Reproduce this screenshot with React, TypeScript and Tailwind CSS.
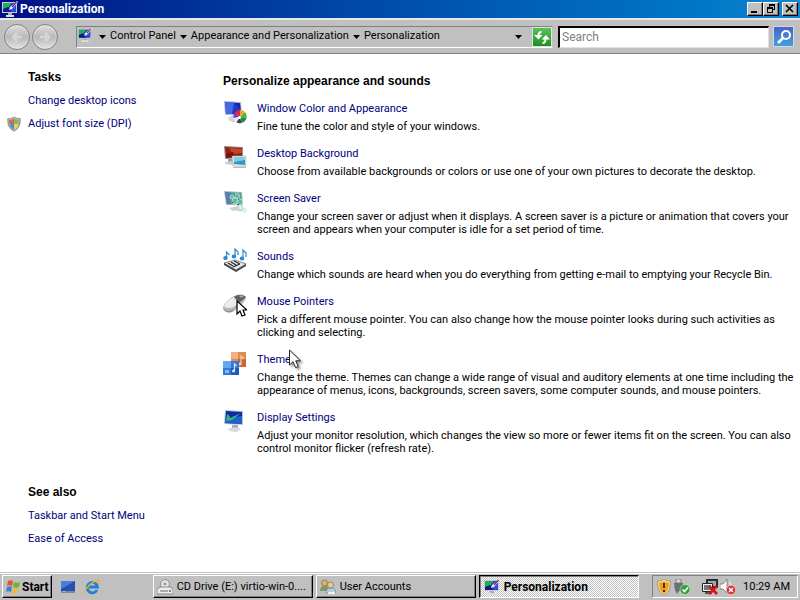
import type { ReactNode } from "react";

const raised =
  "border border-t-white border-l-white border-r-black border-b-black bg-[#c0c0c0] shadow-[inset_-1px_-1px_0_#808080]";

const heading = "font-['Liberation_Sans',Arial,sans-serif] text-[12px] leading-4 font-bold";

function MonitorBrushIcon({ className }: { className: string }) {
  return (
    <svg viewBox="0 0 16 16" className={className} aria-hidden="true">
      <path d="M0 1h15v11H0z" fill="#c8ccd6" />
      <path d="M1 2h13v9H1z" fill="#1b2fc0" />
      <path d="M1 2h9L5 8l-4 1z" fill="#1fae5c" />
      <path d="M1 8l5-2 3 5H1z" fill="#161a80" />
      <path d="M14 2v8l-4 1-2-4z" fill="#2a50e0" />
      <path d="M15 0l1 1-6 7-3 1 1-3z" fill="#e9eefc" />
      <path d="M14.500 1L10 6" stroke="#7a2050" strokeWidth="1.200" />
      <path d="M6 12h4v2H6z" fill="#a8acb4" />
      <path d="M4 14h8v2H4z" fill="#dcdee2" />
    </svg>
  );
}

function ShieldIcon() {
  return (
    <svg viewBox="0 0 16 18" className="h-4 w-4" aria-hidden="true">
      <path d="M8 1c2 1.500 4 2 7 2 0 7-1 11-7 14C2 14 1 10 1 3c3 0 5-.5 7-2z" fill="#b4b4ac" stroke="#85857c" />
      <path d="M8 3v6H3c-.4-1.500-.5-3-.5-4.500C4.500 4.400 6.500 4 8 3z" fill="#cf6a4c" />
      <path d="M8 3v6h5c.4-1.500.5-3 .5-4.500C11.500 4.400 9.500 4 8 3z" fill="#7fb869" />
      <path d="M8 9v6.500C5 14 3.600 12 3 9z" fill="#4c8fd8" />
      <path d="M8 9v6.500c3-1.500 4.400-3.500 5-6.500z" fill="#f3d04c" />
    </svg>
  );
}

function WindowColorIcon() {
  return (
    <svg viewBox="0 0 24 24" className="h-6 w-6" aria-hidden="true">
      <path d="M1 1l17 1 1 13-17 0z" fill="#b4bbe0" />
      <path d="M2 2l15 1 1 11-15 0z" fill="#2038c4" />
      <path d="M2 2l9 .6L9 14H3z" fill="#4668e0" />
      <path d="M11 3l6 .4.5 6z" fill="#1826a0" />
      <path d="M5 18l5-3 5 1v5l-5 1c-3-1-5-2-5-4z" fill="#d0d3da" />
      <path d="M17 17V10a7 7 0 0 1 5 2z" fill="#f4a428" />
      <path d="M17 17l5-5a7 7 0 0 1 1.500 6z" fill="#52b830" />
      <path d="M17 17l6.500 1a7 7 0 0 1-5 5z" fill="#1f8a4a" />
      <path d="M17 17V10a7 7 0 0 0-5.500 3z" fill="#e02c2c" />
      <path d="M17 17l-5.500-4a7 7 0 0 0-1 5z" fill="#8030d0" />
      <path d="M17 17l-6.500 1a7 7 0 0 0 3 4.500z" fill="#e9edf2" />
      <path d="M17 17l1.500 6a7 7 0 0 1-5-.5z" fill="#3c4048" />
      <circle cx="16.500" cy="17.500" r="1.500" fill="#fff" />
    </svg>
  );
}

function BackgroundIcon() {
  return (
    <svg viewBox="0 0 24 24" className="h-6 w-6" aria-hidden="true">
      <path d="M1 1l19 1v11L2 14z" fill="#8c8f96" />
      <path d="M2 2l17 1v9L3 13z" fill="#9c1f10" />
      <path d="M6 3l13 1v4l-9 1z" fill="#c4452c" />
      <path d="M3 9l7-2 2 5-9 1z" fill="#7c120a" />
      <path d="M5 14h5v3H5z" fill="#9a9da3" />
      <path d="M2 17l8-1v4l-8-1z" fill="#c9ccd0" />
      <path d="M9 11h14v11l-13-1z" fill="#dde3e8" stroke="#a8b0b8" strokeWidth=".5" />
      <path d="M11 12h11v8l-11-1z" fill="#2d9ac6" />
      <path d="M11 12h11v3l-11 2z" fill="#7ccfe8" />
      <path d="M10 22h13v1H10z" fill="#b9bdc2" />
    </svg>
  );
}

function ScreenSaverIcon() {
  return (
    <svg viewBox="0 0 24 24" className="h-6 w-6" aria-hidden="true">
      <path d="M1 1l18 1 1 13H3z" fill="#a9b8c0" />
      <path d="M2 2l16 1 1 11H4z" fill="#4a9a98" />
      <path d="M2 2l6 .5L7 14H4z" fill="#5580b0" />
      <path d="M6 18l9-2 4 4-9 1z" fill="#cdd5d3" />
      <g fill="#7ec8ac" fillOpacity=".6" stroke="#bdebd6" strokeWidth=".8">
        <circle cx="9" cy="7" r="2" />
        <circle cx="14" cy="6" r="2.500" />
        <circle cx="12" cy="11" r="3" />
        <circle cx="17" cy="12" r="3" />
        <circle cx="17" cy="18" r="3" fill="#c9ebdc" stroke="#a5cfbd" />
        <circle cx="21.500" cy="20.500" r="1.800" fill="#e0f4ea" stroke="#b9dccc" />
      </g>
      <path d="M11 5h1v1h-1zM15 9h1v1h-1zM9 12h1v1H9zM14 14h2v1h-2z" fill="#226a50" />
    </svg>
  );
}

function SoundsIcon() {
  return (
    <svg viewBox="0 0 24 24" className="h-6 w-6" aria-hidden="true">
      <path d="M1 15l11-3 11 4-10 6z" fill="#e8eaec" stroke="#50545a" strokeWidth=".7" />
      <path d="M1 15v2l12 7 10-6v-2l-10 6z" fill="#43474d" />
      <path d="M5 15l5 3M8 14l5 3M11 13l6 3M10 19l7-3" stroke="#24272b" strokeWidth="1.300" />
      <g fill="#2e86d0" stroke="#2e86d0" strokeWidth="1.200">
        <path d="M3.500 10V4l3 3" fill="none" />
        <ellipse cx="2.500" cy="10" rx="1.700" ry="1.300" />
        <path d="M12 8V1l3 3v3" fill="none" />
        <ellipse cx="11" cy="8.500" rx="1.700" ry="1.300" />
        <path d="M20 10V2l3 3v4" fill="none" />
        <ellipse cx="19" cy="10.500" rx="1.700" ry="1.300" />
      </g>
    </svg>
  );
}

function MouseIcon() {
  return (
    <svg viewBox="0 0 24 24" className="h-6 w-6" aria-hidden="true">
      <path d="M0 15C0 11 7 4 14 2c5-.5 8 0 9 3-1 4-9 12-14 14-5 1-9-1-9-4z" fill="#b4b6ba" />
      <path d="M1 13C3 9 7 5 12 4l4 5c-3 3-6 6-9 6-3 0-6-1-6-2z" fill="#ececee" />
      <path d="M11 4c2-2 8-4 12 0l-7 6z" fill="#5c5f64" />
      <path d="M16 3c2-1 4-1 5 0l-3 2z" fill="#a4a8ad" />
      <path d="M1 16c2 3 7 2 10 0l-2 3c-4 1-8 0-8-3z" fill="#8e9196" />
      <path d="M14 8v13l3-3 2 5 3-1-2-5h4z" fill="#fff" stroke="#000" strokeWidth="1.200" />
    </svg>
  );
}

function ThemeIcon() {
  return (
    <svg viewBox="0 0 24 24" className="h-6 w-6" aria-hidden="true">
      <path d="M8 1h15v15H8z" fill="#e08a54" />
      <path d="M8 1h7v7H8z" fill="#f4b080" />
      <path d="M15 8h8v8h-8z" fill="#c86838" />
      <path d="M18 13V5l3 3" fill="none" stroke="#f8d0b0" strokeWidth="1.200" />
      <circle cx="17" cy="13" r="1.500" fill="#f8d0b0" />
      <path d="M0 10h16v14H0z" fill="#3478d8" />
      <path d="M0 10h8v7H0z" fill="#62a8f0" />
      <path d="M8 17h8v7H8z" fill="#1c58bc" />
      <path d="M11.500 20v-7l2 2" fill="none" stroke="#cfe6ff" strokeWidth="1.200" />
      <circle cx="10.500" cy="20" r="1.500" fill="#cfe6ff" />
      <path d="M2 19h4v3H2z" fill="#7dbcf5" />
    </svg>
  );
}

function DisplayIcon() {
  return (
    <svg viewBox="0 0 24 24" className="h-6 w-6" aria-hidden="true">
      <path d="M2 1l18 1v14L1 15z" fill="#bcc3d0" />
      <path d="M3 2l16 1v12L2 14z" fill="#1028a4" />
      <path d="M2 11l10-3 7-1v8L2 14z" fill="#1c62d0" />
      <path d="M4 5c2 1 3 2 3 4l11-5-9 7-6 1z" fill="#2fb878" />
      <path d="M9 16h6v3H9z" fill="#a9adb3" />
      <path d="M5 20c4-2 10-2 13 0l-4 3c-4 0-9-1-9-3z" fill="#d6d9de" />
    </svg>
  );
}

function FlagIcon() {
  return (
    <svg viewBox="0 0 16 16" className="h-4 w-4" aria-hidden="true">
      <path d="M3 2c2-1 3-1 5 0L7 7C5 6 4 6 2 7z" fill="#e5542b" />
      <path d="M9 3c2 1 4 1 6 0l-1 5c-2 1-4 1-6 0z" fill="#6fb33c" />
      <path d="M2 8c2-1 3-1 5 0l-1 5c-2-1-4-1-5 0z" fill="#3f80d8" />
      <path d="M8 9c2 1 3 1 5 0l-1 5c-2 1-4 1-5 0z" fill="#f3bb2c" />
    </svg>
  );
}

function DesktopIcon() {
  return (
    <svg viewBox="0 0 16 16" className="h-4 w-4" aria-hidden="true">
      <path d="M1 2h14v11H1z" fill="#2450b4" />
      <path d="M1 2h14L1 10z" fill="#4a7fd8" />
      <path d="M1 12h14v2H1z" fill="#8088a0" />
      <path d="M3 12h2v1H3z" fill="#8fe070" />
    </svg>
  );
}

function ExplorerIcon() {
  return (
    <svg viewBox="0 0 16 16" className="h-4 w-4" aria-hidden="true">
      <path d="M13 11a5.200 5.200 0 1 1 .5-3H5" fill="none" stroke="#2080d4" strokeWidth="2.800" />
      <path d="M1 14.500C-1 11 9 1 15 1.500c1 .8 0 2.500-1 3.500" fill="none" stroke="#e8b32e" strokeWidth="1.300" />
    </svg>
  );
}

function DriveIcon() {
  return (
    <svg viewBox="0 0 16 16" className="h-4 w-4" aria-hidden="true">
      <circle cx="8" cy="5" r="4.500" fill="#dfe3e6" stroke="#8b8f94" />
      <circle cx="8" cy="5" r="1.300" fill="#8b8f94" />
      <path d="M2 8h12l2 3v4H0v-4z" fill="#ececec" stroke="#777" strokeWidth=".8" />
      <path d="M3 12h8" stroke="#666" />
      <path d="M12 11h2v2h-2z" fill="#5c9a50" />
    </svg>
  );
}

function UsersIcon() {
  return (
    <svg viewBox="0 0 16 16" className="h-4 w-4" aria-hidden="true">
      <path d="M0 12c0-4 2-5 5-5s4 2 4 5z" fill="#7c9a64" />
      <circle cx="4.500" cy="4" r="3" fill="#d9b46a" stroke="#7f6a3c" strokeWidth=".7" />
      <path d="M6 14c0-4 2-5 5-5s5 2 5 5z" fill="#b8cde2" stroke="#7088a0" strokeWidth=".7" />
      <circle cx="10.500" cy="6" r="3" fill="#e6cf96" stroke="#7f6a3c" strokeWidth=".7" />
      <path d="M8 13h7v2H8z" fill="#e8f0f8" />
    </svg>
  );
}

function SecurityAlertIcon() {
  return (
    <svg viewBox="0 0 16 16" className="h-4 w-4" aria-hidden="true">
      <path d="M8 0c2 1.500 4 2 6.500 2 0 6-1 11-6.500 14C2.500 13 1.500 8 1.500 2 4 2 6 1.500 8 0z" fill="#f6e3a8" stroke="#a58540" strokeWidth=".8" />
      <path d="M8 2c1.500 1 3 1.500 5 1.500 0 5-1 8.500-5 11-4-2.500-5-6-5-11C5 3.500 6.500 3 8 2z" fill="#f0a21c" />
      <path d="M8 4v5M8 11v2" stroke="#5a2a08" strokeWidth="2" />
    </svg>
  );
}

function SafelyRemoveIcon() {
  return (
    <svg viewBox="0 0 16 16" className="h-4 w-4" aria-hidden="true">
      <path d="M2 0h5v4H2z" fill="#d8d8d8" stroke="#707070" strokeWidth=".8" />
      <path d="M0 4h9v8H5l-2 3-2-4z" fill="#6c7074" />
      <circle cx="11" cy="10.500" r="5" fill="#2fa33a" stroke="#d5ecd2" strokeWidth=".6" />
      <path d="M8.500 10.500l2 2 3.500-4" fill="none" stroke="#fff" strokeWidth="1.600" />
    </svg>
  );
}

function NetworkOffIcon() {
  return (
    <svg viewBox="0 0 16 16" className="h-4 w-4" aria-hidden="true">
      <path d="M4.500 .5h11v8h-11z" fill="#30363c" stroke="#202428" />
      <path d="M6 2h8v5H6z" fill="#a0a6ac" />
      <path d="M.5 4.500h10v8H.5z" fill="#f0f0f0" stroke="#202428" />
      <path d="M2 6h7v5H2z" fill="#70787f" />
      <path d="M3 14h7" stroke="#30353a" strokeWidth="1.500" />
      <path d="M7 7l8 8M15 7l-8 8" stroke="#d4151b" strokeWidth="2.800" />
    </svg>
  );
}

function VolumeOffIcon() {
  return (
    <svg viewBox="0 0 16 16" className="h-4 w-4" aria-hidden="true">
      <path d="M0 5h3l4-5v14l-4-4H0z" fill="#fff" stroke="#707070" strokeWidth=".8" />
      <path d="M9 3c1 1 1.500 2 1.500 4" fill="none" stroke="#fff" />
      <circle cx="11" cy="11" r="4.700" fill="#dc2f2f" stroke="#f4caca" strokeWidth=".8" />
      <path d="M9 9l4 4M13 9l-4 4" stroke="#fff" strokeWidth="1.500" />
    </svg>
  );
}

function PointerArrow() {
  return (
    <svg
      viewBox="0 0 14 21"
      className="absolute -top-[2px] -right-3 h-[21px] w-[14px] drop-shadow-[2px_2px_1px_rgba(0,0,0,0.4)]"
      aria-hidden="true"
    >
      <path d="M.5 1v15l3.500-3.300 2.600 6 2.700-1.200-2.600-5.700h4.800z" fill="#fff" stroke="#222" />
    </svg>
  );
}

function Caret({ className = "" }: { className?: string }) {
  return (
    <svg viewBox="0 0 7 4" className={`h-1 w-[7px] shrink-0 ${className}`} aria-hidden="true">
      <path d="M0 0h7L3.500 4z" fill="#000" />
    </svg>
  );
}

function RoundButton({ label, path }: { label: string; path: string }) {
  return (
    <button
      aria-label={label}
      className="flex size-[26px] items-center justify-center rounded-full border border-[#808080] bg-linear-to-b from-[#e0e0e0] via-[#b8b8b8] to-[#e4e4e4] shadow-[inset_0_0_2px_#fff]"
    >
      <svg viewBox="0 0 16 16" className="h-4 w-4" fill="none" stroke="#d6d6d6" strokeWidth="2.500">
        <path d={path} />
      </svg>
    </button>
  );
}

interface Setting {
  title: string;
  text: string;
  icon: ReactNode;
  pointer?: boolean;
}

const settings: Setting[] = [
  {
    title: "Window Color and Appearance",
    text: "Fine tune the color and style of your windows.",
    icon: <WindowColorIcon />,
  },
  {
    title: "Desktop Background",
    text: "Choose from available backgrounds or colors or use one of your own pictures to decorate the desktop.",
    icon: <BackgroundIcon />,
  },
  {
    title: "Screen Saver",
    text: "Change your screen saver or adjust when it displays. A screen saver is a picture or animation that covers your screen and appears when your computer is idle for a set period of time.",
    icon: <ScreenSaverIcon />,
  },
  {
    title: "Sounds",
    text: "Change which sounds are heard when you do everything from getting e-mail to emptying your Recycle Bin.",
    icon: <SoundsIcon />,
  },
  {
    title: "Mouse Pointers",
    text: "Pick a different mouse pointer. You can also change how the mouse pointer looks during such activities as clicking and selecting.",
    icon: <MouseIcon />,
  },
  {
    title: "Theme",
    text: "Change the theme. Themes can change a wide range of visual and auditory elements at one time including the appearance of menus, icons, backgrounds, screen savers, some computer sounds, and mouse pointers.",
    icon: <ThemeIcon />,
    pointer: true,
  },
  {
    title: "Display Settings",
    text: "Adjust your monitor resolution, which changes the view so more or fewer items fit on the screen. You can also control monitor flicker (refresh rate).",
    icon: <DisplayIcon />,
  },
];

function TitleBar() {
  return (
    <header className="flex h-[18px] shrink-0 items-center bg-linear-to-r from-[#000d86] to-[#1084d0] px-[2px]">
      <MonitorBrushIcon className="h-4 w-4" />
      <h1 className="ml-[2px] flex-1 text-[12px] font-bold text-white">Personalization</h1>
      <button aria-label="Minimize" className={`flex h-[14px] w-4 items-center justify-center ${raised}`}>
        <svg viewBox="0 0 10 10" className="size-[10px]">
          <path d="M1 7h6v2H1z" />
        </svg>
      </button>
      <button aria-label="Restore" className={`mr-[3px] flex h-[14px] w-4 items-center justify-center ${raised}`}>
        <svg viewBox="0 0 10 10" className="size-[10px]">
          <path d="M3 0h6v6H7V5h1V2H4v1H3zM1 3h6v6H1zm1 2v3h4V5z" fillRule="evenodd" />
        </svg>
      </button>
      <button aria-label="Close" className={`flex h-[14px] w-4 items-center justify-center ${raised}`}>
        <svg viewBox="0 0 10 10" className="size-[10px]" stroke="#000" strokeWidth="1.600">
          <path d="M1 1l7 7M8 1L1 8" />
        </svg>
      </button>
    </header>
  );
}

function AddressBar() {
  return (
    <div className="flex h-9 shrink-0 items-center border-t-2 border-b border-t-[#e8e8e8] border-b-[#808080] bg-[#c0c0c0] pr-[6px] pl-1">
      <div className="flex gap-[2px]">
        <RoundButton label="Back" path="M13 8H4M8 4L4 8l4 4" />
        <RoundButton label="Forward" path="M3 8h9M8 4l4 4-4 4" />
      </div>
      <nav
        aria-label="Address"
        className="ml-[18px] flex h-[22px] flex-1 items-center border border-t-[#808080] border-r-transparent border-b-white border-l-[#808080]"
      >
        <MonitorBrushIcon className="mb-1 ml-px h-4 w-[14px]" />
        <Caret className="mr-1 ml-[7px]" />
        <a href="#control-panel">Control Panel</a>
        <Caret className="mx-1" />
        <a href="#appearance">Appearance and Personalization</a>
        <Caret className="mx-1" />
        <a href="#personalization">Personalization</a>
        <button aria-label="Previous locations" className="mr-[10px] ml-auto flex h-4 items-center">
          <Caret />
        </button>
        <button
          aria-label="Refresh"
          className="flex size-5 items-center justify-center border border-[#d8e8d8] bg-linear-to-b from-[#5cbf5c] to-[#1c8f22]"
        >
          <svg viewBox="0 0 16 16" className="h-4 w-4" fill="none" stroke="#fff" strokeWidth="2">
            <path d="M7.500 3C5 3 4.500 4.500 4.500 7" />
            <path d="M8.500 14c2.500 0 3-1.500 3-4" />
            <path d="M0 6h8.500L4.500 10.500zM7.500 10.500h8.500L12 6z" fill="#fff" stroke="none" />
          </svg>
        </button>
      </nav>
      <input
        type="search"
        aria-label="Search"
        placeholder="Search"
        className="ml-[5px] h-[22px] w-[211px] border border-t-2 border-l-2 border-t-black border-r-[#e0e0e0] border-b-[#e0e0e0] border-l-black bg-white px-[2px] text-[12px] outline-none placeholder:text-[#808080]"
      />
      <button
        aria-label="Go"
        className="ml-1 flex size-[21px] items-center justify-center border border-[#d0d8e8] bg-linear-to-b from-[#4a62c8] to-[#3fa0e0]"
      >
        <svg viewBox="0 0 16 16" className="h-4 w-4" fill="none" stroke="#fff" strokeWidth="2">
          <circle cx="10" cy="6" r="4" />
          <path d="M7 9l-5 5" strokeWidth="2.600" />
        </svg>
      </button>
    </div>
  );
}

function SideLink({ href, children }: { href: string; children: ReactNode }) {
  return (
    <a href={href} className="text-[#00007c] hover:underline">
      {children}
    </a>
  );
}

function Sidebar() {
  return (
    <aside className="flex w-[223px] shrink-0 flex-col justify-between pt-[15px] pb-6 leading-[18px]">
      <section>
        <h2 className={`pl-7 ${heading}`}>Tasks</h2>
        <ul className="mt-[7px] flex flex-col gap-[5px]">
          <li className="pl-7">
            <SideLink href="#icons">Change desktop icons</SideLink>
          </li>
          <li className="flex items-center gap-[6px] pl-[6px]">
            <ShieldIcon />
            <SideLink href="#dpi">Adjust font size (DPI)</SideLink>
          </li>
        </ul>
      </section>
      <section className="pl-7">
        <h2 className={heading}>See also</h2>
        <ul className="mt-[7px] flex flex-col gap-[5px]">
          <li>
            <SideLink href="#taskbar">Taskbar and Start Menu</SideLink>
          </li>
          <li>
            <SideLink href="#ease">Ease of Access</SideLink>
          </li>
        </ul>
      </section>
    </aside>
  );
}

function SettingRow({ title, text, icon, pointer }: Setting) {
  return (
    <li className="flex gap-[10px]">
      <div className="shrink-0">{icon}</div>
      <div>
        <div className="relative w-fit leading-[18px]">
          <SideLink href={`#${title}`}>{title}</SideLink>
          {pointer && <PointerArrow />}
        </div>
        <p className="mt-[2px] leading-[13px]">{text}</p>
      </div>
    </li>
  );
}

function TaskButton({ icon, label, active }: { icon: ReactNode; label: string; active?: boolean }) {
  return (
    <button
      aria-pressed={active}
      className={
        active
          ? "flex h-[23px] max-w-40 flex-1 items-center gap-1 border border-t-black border-r-white border-b-white border-l-black bg-[repeating-conic-gradient(#ffffff_0_25%,#c0c0c0_0_50%)] bg-[length:2px_2px] px-1 pt-px text-[12px] font-bold shadow-[inset_1px_1px_0_#808080]"
          : `flex h-[23px] max-w-40 flex-1 items-center gap-1 px-[3px] pt-px ${raised}`
      }
    >
      <span className="shrink-0">{icon}</span>
      <span className="whitespace-nowrap">{label}</span>
    </button>
  );
}

function Taskbar() {
  return (
    <footer className="flex h-7 shrink-0 items-center border-t border-t-[#c0c0c0] bg-[#c0c0c0] px-[2px] shadow-[inset_0_1px_0_#fff]">
      <button className={`flex h-[23px] items-center gap-px px-[2px] text-[12px] font-bold ${raised}`}>
        <FlagIcon />
        Start
      </button>
      <div className="ml-2 flex w-[93px] shrink-0 gap-2">
        <button aria-label="Show desktop">
          <DesktopIcon />
        </button>
        <button aria-label="Internet Explorer">
          <ExplorerIcon />
        </button>
      </div>
      <div className="flex min-w-0 flex-1 gap-[3px]">
        <TaskButton icon={<DriveIcon />} label="CD Drive (E:) virtio-win-0...." />
        <TaskButton icon={<UsersIcon />} label="User Accounts" />
        <TaskButton icon={<MonitorBrushIcon className="h-4 w-4" />} label="Personalization" active />
      </div>
      <div className="ml-3 flex h-[23px] items-center border border-t-[#808080] border-r-white border-b-white border-l-[#808080] px-[3px]">
        <SecurityAlertIcon />
        <span className="ml-[2px]">
          <SafelyRemoveIcon />
        </span>
        <span className="ml-3">
          <NetworkOffIcon />
        </span>
        <span className="ml-[2px]">
          <VolumeOffIcon />
        </span>
        <time className="mr-1 ml-[7px] pt-px whitespace-nowrap">10:29 AM</time>
      </div>
    </footer>
  );
}

export default function App() {
  return (
    <div className="flex h-screen flex-col bg-white font-[Roboto,'Liberation_Sans',sans-serif] text-[11px] text-black">
      <TitleBar />
      <AddressBar />
      <div className="flex min-h-0 flex-1">
        <Sidebar />
        <main className="flex-1 pt-[19px] pr-1">
          <h2 className={heading}>Personalize appearance and sounds</h2>
          <ul className="mt-[11px] flex flex-col gap-3">
            {settings.map((setting) => (
              <SettingRow key={setting.title} {...setting} />
            ))}
          </ul>
        </main>
      </div>
      <Taskbar />
    </div>
  );
}
